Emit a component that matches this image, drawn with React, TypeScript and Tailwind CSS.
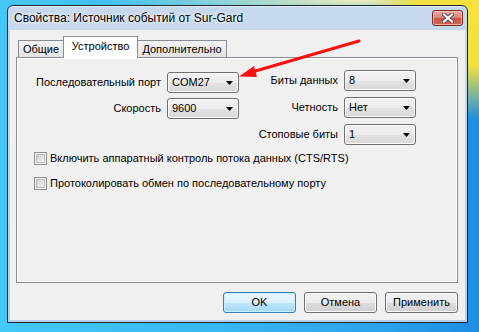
import React from "react";

const ui = "font-['Liberation_Sans',Arial,sans-serif]";

function Combo({ value }: { value: string }) {
  return (
    <div className="flex h-[21px] w-[72px] items-center justify-between rounded-[3px] border border-[#707070] bg-[linear-gradient(180deg,#f3f3f3_0%,#ececec_50%,#e2e2e2_51%,#d8d8d8_100%)] pl-[4px] pr-[5px] text-[11px] text-black shadow-[inset_0_0_0_1px_#fcfcfc]">
      <span className="leading-none">{value}</span>
      <svg width="7" height="4" viewBox="0 0 7 4">
        <path d="M0 0H7L3.5 4Z" fill="#000" />
      </svg>
    </div>
  );
}

function Row({ label, value }: { label: string; value: string }) {
  return (
    <div className="flex h-[21px] items-center justify-end gap-[6px]">
      <span className="whitespace-nowrap text-[11px] leading-none text-black">{label}</span>
      <Combo value={value} />
    </div>
  );
}

function Check({ label }: { label: string }) {
  return (
    <div className="flex h-[15px] items-center gap-[3px]">
      <div className="flex h-[13px] w-[13px] items-center justify-center border border-[#8e8f8f] bg-[#f4f4f4]">
        <div className="h-[9px] w-[9px] border border-[#b9bcc0] bg-[linear-gradient(135deg,#cbcfd5,#f3f3f3)]" />
      </div>
      <span className="whitespace-nowrap text-[11px] leading-none text-black">{label}</span>
    </div>
  );
}

function Btn({ label, def }: { label: string; def?: boolean }) {
  return (
    <div
      className={
        def
          ? "flex h-[21px] w-[73px] items-center justify-center rounded-[3px] border border-[#3c7fb1] bg-[linear-gradient(180deg,#eaf6fd_0%,#d9f0fc_50%,#bee6fd_51%,#a7d9f5_100%)] text-[11px] text-black shadow-[inset_0_0_0_1px_#c6f0ff]"
          : "flex h-[21px] w-[73px] items-center justify-center rounded-[3px] border border-[#707070] bg-[linear-gradient(180deg,#f2f2f2_0%,#ebebeb_50%,#dddddd_51%,#cfcfcf_100%)] text-[11px] text-black shadow-[inset_0_0_0_1px_#fcfcfc]"
      }
    >
      {label}
    </div>
  );
}

export default function App() {
  return (
    <div
      className={`relative h-[332px] w-[479px] overflow-hidden bg-[radial-gradient(ellipse_110px_120px_at_100%_0%,#f6e23c_0%,#f0e040_55%,rgba(240,224,64,0)_100%),radial-gradient(ellipse_260px_20px_at_75%_0%,#f2f0b8_0%,rgba(242,240,184,0)_100%),linear-gradient(90deg,#44c8f7_0%,#38b8f2_45%,#2aa2ec_80%,#1d8de2_100%)] pl-[7px] pt-[5px] ${ui}`}
    >
      {/* window */}
      <div className="flex h-[318px] w-[461px] flex-col rounded-t-[6px] border border-[#1e2630] bg-[linear-gradient(180deg,#c6d8ec_0%,#b9cfe8_100%)] shadow-[inset_0_1px_0_#e6eef8]">
        {/* title bar */}
        <div className="flex h-[24px] items-start justify-between pl-[6px] pr-[4px]">
          <span className="mt-[4px] whitespace-nowrap text-[12px] leading-[16px] text-black [text-shadow:0_0_6px_#fff,0_0_3px_#fff]">
            Свойства: Источник событий от Sur-Gard
          </span>
          <div className="mt-[4px] flex h-[16px] w-[31px] items-center justify-center rounded-[3px] border border-[#7a2a22] bg-[linear-gradient(180deg,#e8a89f_0%,#d98a80_45%,#c75343_55%,#d0685a_100%)] shadow-[inset_0_0_0_1px_rgba(255,220,210,0.6)]">
            <svg width="12" height="10" viewBox="0 0 12 10">
              <path d="M2 1.5L10 8.5M10 1.5L2 8.5" stroke="#5a4a48" strokeWidth="4" strokeLinecap="square" />
              <path d="M2 1.5L10 8.5M10 1.5L2 8.5" stroke="#fff" strokeWidth="2.2" strokeLinecap="square" />
            </svg>
          </div>
        </div>
        {/* client */}
        <div className="mx-[2px] flex h-[290px] flex-col bg-[#f0f0f0] pl-[6px] pt-[6px]">
          {/* tabs */}
          <div className="flex h-[21px] items-end pl-[2px]">
            <div className="flex h-[17px] w-[45px] items-center justify-center border-l border-t border-[#898c95] bg-[linear-gradient(180deg,#f2f2f2,#e3e3e3)] text-[11px] text-black">
              Общие
            </div>
            <div className="relative z-10 -mb-[1px] flex h-[22px] w-[75px] items-center justify-center border-x border-t border-[#898c95] bg-white pb-[3px] text-[11px] text-black">
              Устройство
            </div>
            <div className="flex h-[17px] w-[89px] items-center justify-center border-r border-t border-[#898c95] bg-[linear-gradient(180deg,#f2f2f2,#e3e3e3)] text-[11px] text-black">
              Дополнительно
            </div>
          </div>
          {/* panel */}
          <div className="flex h-[226px] w-[442px] flex-col border border-[#898c95] bg-[#f0f0f0] shadow-[inset_1px_1px_0_#fff,inset_-1px_-1px_0_#fff]">
            <div className="flex items-start">
              <div className="flex w-[222px] flex-col gap-[5px] pt-[14px]">
                <Row label="Последовательный порт" value="COM27" />
                <Row label="Скорость" value="9600" />
              </div>
              <div className="flex w-[177px] flex-col gap-[6px] pt-[12px]">
                <Row label="Биты данных" value="8" />
                <Row label="Четность" value="Нет" />
                <Row label="Стоповые биты" value="1" />
              </div>
            </div>
            <div className="ml-[17px] mt-[6px] flex flex-col gap-[10px]">
              <Check label="Включить аппаратный контроль потока данных (CTS/RTS)" />
              <Check label="Протоколировать обмен по последовательному порту" />
            </div>
          </div>
          {/* buttons */}
          <div className="mt-[9px] flex w-[442px] justify-end gap-[8px]">
            <Btn label="OK" def />
            <Btn label="Отмена" />
            <Btn label="Применить" />
          </div>
        </div>
      </div>

      {/* red annotation arrow */}
      <svg className="pointer-events-none absolute left-0 top-0" width="479" height="332" viewBox="0 0 479 332">
        <line x1="359" y1="41" x2="252" y2="72" stroke="#ff1010" strokeWidth="3" strokeLinecap="round" />
        <path d="M239 76.5L254 66L257 77Z" fill="#ff1010" />
      </svg>
    </div>
  );
}
